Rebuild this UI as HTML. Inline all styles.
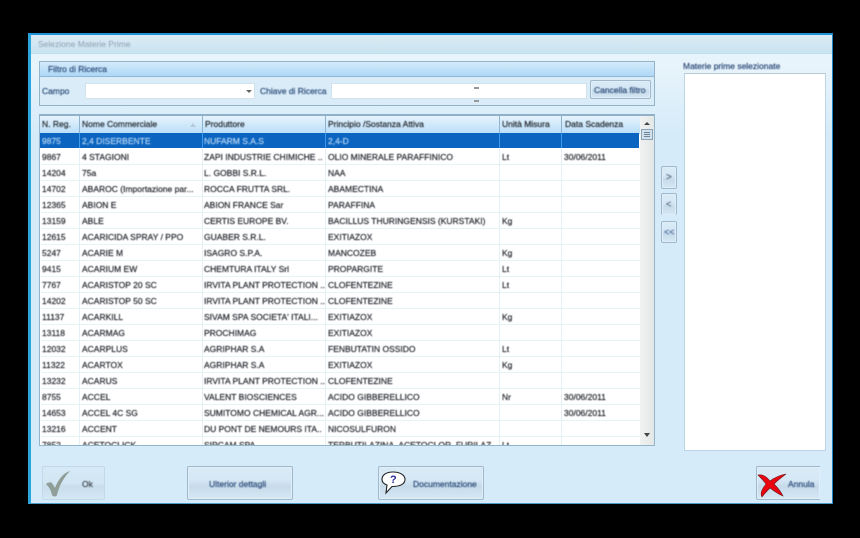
<!DOCTYPE html>
<html><head><meta charset="utf-8"><style>
*{box-sizing:border-box}
html,body{margin:0;padding:0;background:#000;width:860px;height:538px;overflow:hidden}
body{position:relative;font-family:"Liberation Sans",sans-serif;font-size:8.5px;color:#24282f}
.a{position:absolute}
.t{position:absolute;white-space:nowrap;line-height:12px;filter:blur(.4px);-webkit-text-stroke:.2px currentColor}
.btn{position:absolute;border:1px solid #9fb8cb;border-radius:2px;background:linear-gradient(#d9ebf7,#d6e8f5 40%,#c6dbea 60%,#d5e7f4);box-shadow:inset 0 0 0 1px #e0eef7}
.row{position:absolute;left:1px;width:599px;height:16px;border-bottom:1px solid #e8f3f8}
.v{position:absolute;top:1px;width:1px;height:330px;background:#e4f0f6}
.h{position:absolute;top:1px;height:18px;width:1px;background:#8fb3cd}
</style></head><body>
<div class="a" style="left:28px;top:33px;width:805px;height:471px;background:linear-gradient(#e8f4fb 20px,#e8f4fb 30px,#d5ebf9 100px,#d5ebf9);border:1px solid #1f82c4;border-left:3px solid #2ba6dd;border-top:2px solid #1f8fd6;border-bottom-color:#4f9cc6"></div>
<div class="a" style="left:31px;top:35px;width:801px;height:19px;background:linear-gradient(#dcecf5,#c9e3f0);border-bottom:1px solid #c0dfe9"></div>
<div class="t" style="left:38px;top:38px;color:#8f9fae;-webkit-text-stroke:0">Selezione Materie Prime</div>

<!-- filter -->
<div class="a" style="left:39px;top:61px;width:616px;height:45px;border:1px solid #94b4ca;background:#d9ecf8"></div>
<div class="a" style="left:40px;top:62px;width:614px;height:15px;background:linear-gradient(#d4eafa,#aed8f7);border-bottom:1px solid #8fb6d2"></div>
<div class="t" style="left:48px;top:63px;color:#2c4a78">Filtro di Ricerca</div>
<div class="t" style="left:42px;top:85px;color:#2c4a78">Campo</div>
<div class="a" style="left:85px;top:83px;width:170px;height:16px;background:#fff;border:1px solid #d2e2ec"></div>
<div class="a" style="left:246px;top:90px;width:0;height:0;border:3px solid transparent;border-top:3px solid #666"></div>
<div class="t" style="left:260px;top:85px;color:#2c4a78">Chiave di Ricerca</div>
<div class="a" style="left:331px;top:83px;width:256px;height:16px;background:#fff;border:1px solid #d2e2ec"></div>
<div class="a" style="left:474px;top:87px;width:5px;height:2px;background:#999"></div>
<div class="a" style="left:474px;top:100px;width:5px;height:2px;background:#999"></div>
<div class="btn" style="left:590px;top:80px;width:61px;height:19px"></div>
<div class="t" style="left:594px;top:84px;color:#2c4a78">Cancella filtro</div>

<!-- grid -->
<div class="a" style="left:39px;top:114px;width:616px;height:332px;border:1px solid #94b4ca;border-top:2px solid #8fb0c8;background:#fff;overflow:hidden">
 <div class="a" style="left:0;top:0;width:600px;height:18px;background:linear-gradient(#e6f3fc,#b8def9)"></div>
 <div class="a" style="left:600px;top:0;width:15px;height:330px;background:linear-gradient(90deg,#f0f2f2,#e2e6e4)"></div>
 <div class="a" style="left:604px;top:3px;border:3px solid transparent;border-bottom:3px solid #444;width:0;height:0"></div>
 <div class="a" style="left:601px;top:13px;width:12px;height:11px;background:#cfe0ec;border:1px solid #8aa5ba"></div>
 <div class="a" style="left:604px;top:16px;width:6px;height:5px;border-top:1px solid #6f8496;border-bottom:1px solid #6f8496"></div>
 <div class="a" style="left:604px;top:18px;width:6px;height:1px;background:#6f8496"></div>
 <div class="a" style="left:604px;top:317px;border:3px solid transparent;border-top:4px solid #444;width:0;height:0"></div>
 <div class="a" style="left:150px;top:4px;border:3px solid transparent;border-bottom:4px solid #b5c9d8;width:0;height:0"></div>
 <div class="row" style="top:33px"></div><div class="row" style="top:49px"></div><div class="row" style="top:65px"></div><div class="row" style="top:81px"></div><div class="row" style="top:97px"></div><div class="row" style="top:113px"></div><div class="row" style="top:129px"></div><div class="row" style="top:145px"></div><div class="row" style="top:161px"></div><div class="row" style="top:177px"></div><div class="row" style="top:193px"></div><div class="row" style="top:209px"></div><div class="row" style="top:225px"></div><div class="row" style="top:241px"></div><div class="row" style="top:257px"></div><div class="row" style="top:273px"></div><div class="row" style="top:289px"></div><div class="row" style="top:305px"></div>
 <div class="v" style="left:39px"></div><div class="v" style="left:162px"></div><div class="v" style="left:285px"></div><div class="v" style="left:459px"></div><div class="v" style="left:521px"></div>
 <div class="a" style="left:0;top:17px;width:599px;height:15px;background:#0a64c0"></div>
 <div class="h" style="left:39px;top:0"></div><div class="h" style="left:162px;top:0"></div><div class="h" style="left:285px;top:0"></div><div class="h" style="left:459px;top:0"></div><div class="h" style="left:521px;top:0"></div>
 <div class="a" style="left:39px;top:17px;width:1px;height:15px;background:#3b9be8"></div><div class="a" style="left:162px;top:17px;width:1px;height:15px;background:#3b9be8"></div><div class="a" style="left:285px;top:17px;width:1px;height:15px;background:#3b9be8"></div><div class="a" style="left:459px;top:17px;width:1px;height:15px;background:#3b9be8"></div><div class="a" style="left:521px;top:17px;width:1px;height:15px;background:#3b9be8"></div>
</div>
<div class="t" style="left:42px;top:118px">N. Reg.</div><div class="t" style="left:82px;top:118px">Nome Commerciale</div><div class="t" style="left:205px;top:118px">Produttore</div><div class="t" style="left:328px;top:118px">Principio /Sostanza Attiva</div><div class="t" style="left:502px;top:118px">Unità Misura</div><div class="t" style="left:565px;top:118px">Data Scadenza</div>
<div class="t" style="left:42px;top:135px;color:#b6d4f2">9875</div><div class="t" style="left:82px;top:135px;color:#b6d4f2">2,4 DISERBENTE</div><div class="t" style="left:204px;top:135px;color:#b6d4f2">NUFARM S.A.S</div><div class="t" style="left:328px;top:135px;color:#b6d4f2">2,4-D</div>
<div class="t" style="left:42px;top:151px">9867</div><div class="t" style="left:82px;top:151px">4 STAGIONI</div><div class="t" style="left:204px;top:151px">ZAPI INDUSTRIE CHIMICHE ..</div><div class="t" style="left:328px;top:151px">OLIO MINERALE PARAFFINICO</div><div class="t" style="left:502px;top:151px">Lt</div><div class="t" style="left:564px;top:151px">30/06/2011</div>
<div class="t" style="left:42px;top:167px">14204</div><div class="t" style="left:82px;top:167px">75a</div><div class="t" style="left:204px;top:167px">L. GOBBI S.R.L.</div><div class="t" style="left:328px;top:167px">NAA</div>
<div class="t" style="left:42px;top:183px">14702</div><div class="t" style="left:82px;top:183px">ABAROC (Importazione par...</div><div class="t" style="left:204px;top:183px">ROCCA FRUTTA SRL.</div><div class="t" style="left:328px;top:183px">ABAMECTINA</div>
<div class="t" style="left:42px;top:199px">12365</div><div class="t" style="left:82px;top:199px">ABION E</div><div class="t" style="left:204px;top:199px">ABION FRANCE Sar</div><div class="t" style="left:328px;top:199px">PARAFFINA</div>
<div class="t" style="left:42px;top:215px">13159</div><div class="t" style="left:82px;top:215px">ABLE</div><div class="t" style="left:204px;top:215px">CERTIS EUROPE BV.</div><div class="t" style="left:328px;top:215px">BACILLUS THURINGENSIS (KURSTAKI)</div><div class="t" style="left:502px;top:215px">Kg</div>
<div class="t" style="left:42px;top:231px">12615</div><div class="t" style="left:82px;top:231px">ACARICIDA SPRAY / PPO</div><div class="t" style="left:204px;top:231px">GUABER S.R.L.</div><div class="t" style="left:328px;top:231px">EXITIAZOX</div>
<div class="t" style="left:42px;top:247px">5247</div><div class="t" style="left:82px;top:247px">ACARIE M</div><div class="t" style="left:204px;top:247px">ISAGRO S.P.A.</div><div class="t" style="left:328px;top:247px">MANCOZEB</div><div class="t" style="left:502px;top:247px">Kg</div>
<div class="t" style="left:42px;top:263px">9415</div><div class="t" style="left:82px;top:263px">ACARIUM EW</div><div class="t" style="left:204px;top:263px">CHEMTURA ITALY Srl</div><div class="t" style="left:328px;top:263px">PROPARGITE</div><div class="t" style="left:502px;top:263px">Lt</div>
<div class="t" style="left:42px;top:279px">7767</div><div class="t" style="left:82px;top:279px">ACARISTOP 20 SC</div><div class="t" style="left:204px;top:279px">IRVITA PLANT PROTECTION ..</div><div class="t" style="left:328px;top:279px">CLOFENTEZINE</div><div class="t" style="left:502px;top:279px">Lt</div>
<div class="t" style="left:42px;top:295px">14202</div><div class="t" style="left:82px;top:295px">ACARISTOP 50 SC</div><div class="t" style="left:204px;top:295px">IRVITA PLANT PROTECTION ..</div><div class="t" style="left:328px;top:295px">CLOFENTEZINE</div>
<div class="t" style="left:42px;top:311px">11137</div><div class="t" style="left:82px;top:311px">ACARKILL</div><div class="t" style="left:204px;top:311px">SIVAM SPA SOCIETA' ITALI...</div><div class="t" style="left:328px;top:311px">EXITIAZOX</div><div class="t" style="left:502px;top:311px">Kg</div>
<div class="t" style="left:42px;top:327px">13118</div><div class="t" style="left:82px;top:327px">ACARMAG</div><div class="t" style="left:204px;top:327px">PROCHIMAG</div><div class="t" style="left:328px;top:327px">EXITIAZOX</div>
<div class="t" style="left:42px;top:343px">12032</div><div class="t" style="left:82px;top:343px">ACARPLUS</div><div class="t" style="left:204px;top:343px">AGRIPHAR S.A</div><div class="t" style="left:328px;top:343px">FENBUTATIN OSSIDO</div><div class="t" style="left:502px;top:343px">Lt</div>
<div class="t" style="left:42px;top:359px">11322</div><div class="t" style="left:82px;top:359px">ACARTOX</div><div class="t" style="left:204px;top:359px">AGRIPHAR S.A</div><div class="t" style="left:328px;top:359px">EXITIAZOX</div><div class="t" style="left:502px;top:359px">Kg</div>
<div class="t" style="left:42px;top:375px">13232</div><div class="t" style="left:82px;top:375px">ACARUS</div><div class="t" style="left:204px;top:375px">IRVITA PLANT PROTECTION ..</div><div class="t" style="left:328px;top:375px">CLOFENTEZINE</div>
<div class="t" style="left:42px;top:391px">8755</div><div class="t" style="left:82px;top:391px">ACCEL</div><div class="t" style="left:204px;top:391px">VALENT BIOSCIENCES</div><div class="t" style="left:328px;top:391px">ACIDO GIBBERELLICO</div><div class="t" style="left:502px;top:391px">Nr</div><div class="t" style="left:564px;top:391px">30/06/2011</div>
<div class="t" style="left:42px;top:407px">14653</div><div class="t" style="left:82px;top:407px">ACCEL 4C SG</div><div class="t" style="left:204px;top:407px">SUMITOMO CHEMICAL AGR...</div><div class="t" style="left:328px;top:407px">ACIDO GIBBERELLICO</div><div class="t" style="left:564px;top:407px">30/06/2011</div>
<div class="t" style="left:42px;top:423px">13216</div><div class="t" style="left:82px;top:423px">ACCENT</div><div class="t" style="left:204px;top:423px">DU PONT DE NEMOURS ITA..</div><div class="t" style="left:328px;top:423px">NICOSULFURON</div>
<div class="a" style="left:40px;top:437px;width:599px;height:8px;overflow:hidden">
<div class="t" style="left:2px;top:2px">7852</div><div class="t" style="left:42px;top:2px">ACETOCLICK</div><div class="t" style="left:164px;top:2px">SIPCAM SPA</div><div class="t" style="left:288px;top:2px">TERBUTILAZINA, ACETOCLOR, FURILAZ</div><div class="t" style="left:462px;top:2px">Lt</div>
</div>

<!-- move buttons -->
<div class="btn" style="left:661px;top:166px;width:16px;height:23px"></div><div class="t" style="left:666px;top:172px;color:#5a6a80;font-size:10px">&gt;</div>
<div class="btn" style="left:661px;top:193px;width:16px;height:22px;border-bottom:none"></div><div class="t" style="left:666px;top:198px;color:#5a6a80;font-size:9px">&lt;</div>
<div class="btn" style="left:661px;top:221px;width:16px;height:22px"></div><div class="t" style="left:664px;top:226px;color:#4a6a9a;font-size:9px">&lt;&lt;</div>

<!-- right list -->
<div class="t" style="left:683px;top:60px;color:#2c4a78">Materie prime selezionate</div>
<div class="a" style="left:684px;top:73px;width:142px;height:378px;background:#fff;border:1px solid #bcd4e4;border-top-color:#b8c8d0"></div>

<!-- bottom buttons -->
<div class="btn" style="left:42px;top:466px;width:63px;height:34px;border-color:#c4d9e7;box-shadow:none;background:linear-gradient(#d6e9f6,#d2e6f3 50%,#c9deec 60%,#d3e7f4)"></div>
<svg class="a" style="left:44px;top:468px" width="28" height="30" viewBox="0 0 28 30"><path d="M2 16 C4 14 7 14 8 15 L11 20 C14 12 19 5 26 3 C20 9 15 18 13 27 C12 29 9 29 8 27 C7 22 5 19 2 16Z" fill="#8f9e96"/></svg>
<div class="t" style="left:82px;top:478px;color:#3c444c">Ok</div>
<div class="btn" style="left:187px;top:466px;width:106px;height:34px"></div>
<div class="t" style="left:209px;top:478px;color:#2c4a78">Ulterior dettagli</div>
<div class="btn" style="left:378px;top:466px;width:106px;height:34px"></div>
<svg class="a" style="left:381px;top:471px" width="26" height="24" viewBox="0 0 26 24"><path d="M12 1 C5 1 1 4 1 8.500 C1 11 3 13 6 14 L5 22 L11 15.500 C19 15.500 24 13 24 8.500 C24 4 19 1 12 1Z" fill="#fff" stroke="#222" stroke-width="1.1"/><text x="9" y="12" font-family="Liberation Sans" font-size="11" font-weight="bold" fill="#26269a">?</text></svg>
<div class="t" style="left:413px;top:478px;color:#2c4a78">Documentazione</div>
<div class="btn" style="left:756px;top:466px;width:64px;height:34px;border-right:none;border-radius:2px 0 0 2px"></div>
<svg class="a" style="left:757px;top:472px" width="30" height="26" viewBox="0 0 30 26"><path d="M1 3 C5 2 9 4 13 9 C17 6 23 3 29 2 C25 5 20 9 17 12 C20 15 24 20 26 24 C21 22 17 19 13 16 C10 19 7 22 5 25 C3 22 5 17 9 12 C6 8 4 6 1 3Z" fill="#ea0510" stroke="#6a1414" stroke-width=".6"/></svg>
<div class="t" style="left:788px;top:478px;color:#2c4a78">Annula</div>
</body></html>
